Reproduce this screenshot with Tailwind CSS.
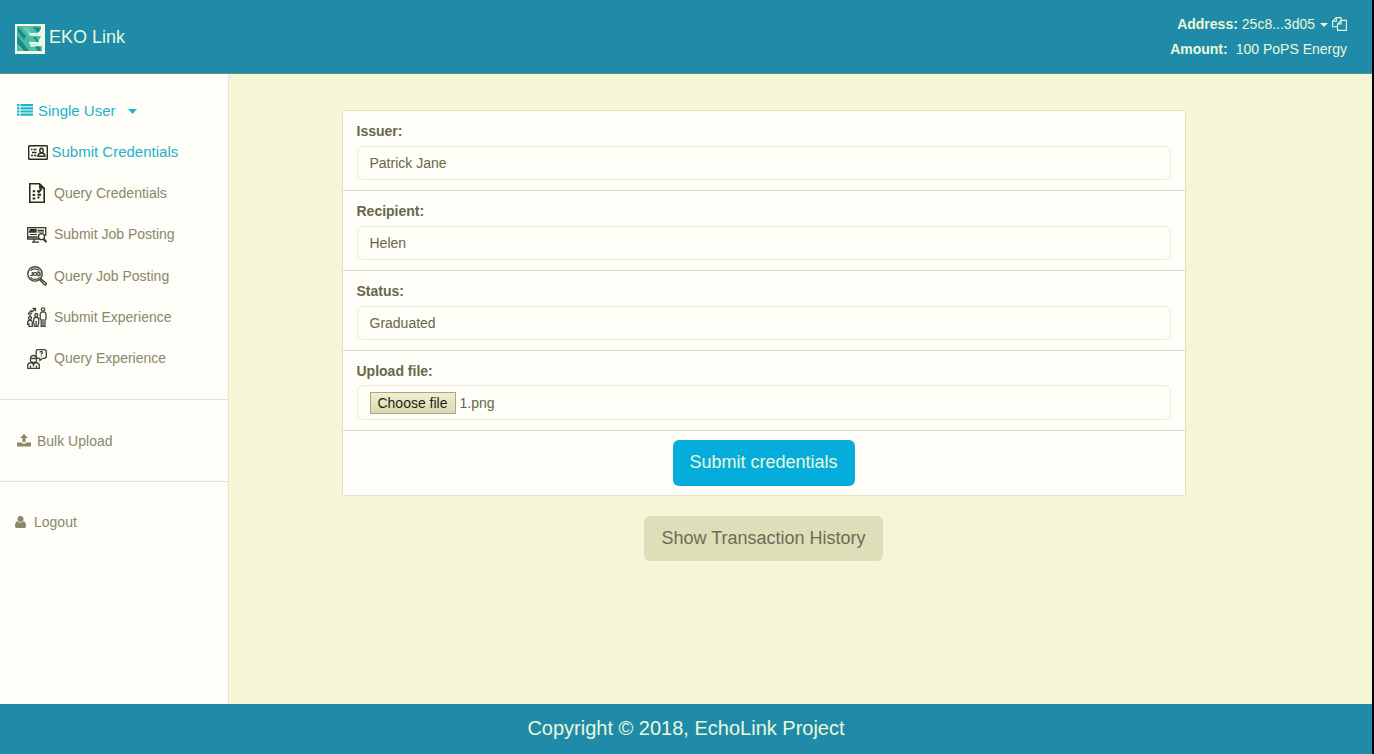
<!DOCTYPE html>
<html lang="en">
<head>
<meta charset="utf-8">
<title>EKO Link</title>
<script src="https://cdn.jsdelivr.net/npm/@tailwindcss/browser@4"></script>
</head>
<body class="flex h-[754px] w-[1374px] flex-col overflow-hidden border-r-2 border-black bg-[#f5f5d8] font-['Liberation_Sans',Arial,sans-serif] text-sm leading-5 text-[#66684a]">

<header class="flex h-[74px] shrink-0 justify-between border-b border-[#4e9a8c] bg-[#208ba9] pt-3 pr-[25px] pl-[15px] text-[#e8f9da]">
  <a class="flex h-[50px] items-center gap-1 text-lg text-[#e8f9da]">
    <svg class="mt-[4px] size-[30px]" viewBox="0 0 30 30">
      <rect width="30" height="30" fill="#eefbe2"/>
      <path d="M2 2h10l3 9v6l-1 1 4 9H2z" fill="#45bba5"/>
      <path d="M12 2h14v2l-3 5h-8zM15 12h11l-3 6h-8zM15 27l1-4 8-1h3v5z" fill="#4fc0a4"/>
      <path d="M2 11l12 16H8L2 19zM3 3l8 9-2 4-6-8zM18 3l4 5h2l2-4zM18 13l4 5h2l-3-5zM20 23l3 4h3l-2-5z" fill="#168b94"/>
      <path d="M9 3l6 9M4 22l4 5M24 10l-9 1.500M24 20l-10 1" stroke="#a9e3cb" stroke-width=".9" fill="none"/>
    </svg>
    <span>EKO Link</span>
  </a>
  <div class="flex flex-col items-end gap-[5px] pt-[2px]">
    <div class="flex h-5 items-center"><b class="mr-1">Address:</b>25c8...3d05
      <svg class="mt-0.5 ml-[5px] h-1 w-2" viewBox="0 0 8 4"><path d="M0 0h8L4 4z" fill="currentColor"/></svg>
      <svg class="ml-1 h-[14px] w-[15px]" viewBox="0 0 15 14" fill="none" stroke="currentColor" stroke-width="1.100"><path d="M5.500 9.800H.6V4.200L4.200.6H9v2.700M4.300.6v3.700H.6M5.500 6.900L9.100 3.400h5.300v10H5.500zM9.100 3.400v3.500H5.500"/></svg>
    </div>
    <div class="h-5"><b class="mr-2">Amount:</b>100 PoPS Energy</div>
  </div>
</header>

<div class="flex min-h-0 flex-1">
  <aside class="w-[229px] shrink-0 border-r border-[#e6e6d0] bg-[#fefdf7] text-[#87896a]">
    <nav class="flex h-[326px] flex-col border-b border-[#e2e2c8] pt-[27px]">
      <a class="flex h-5 items-center pl-[17px] text-[15px] text-[#1fb2cc]">
        <svg class="mr-[5px] mb-[2px] h-3 w-4" viewBox="0 0 16 12" fill="currentColor"><path d="M0 0h2.500v2.200H0zM3.500 0H16v2.200H3.500zM0 3.200h2.500v2.200H0zM3.500 3.200H16v2.200H3.500zM0 6.400h2.500v2.200H0zM3.500 6.400H16v2.200H3.500zM0 9.600h2.500v2.200H0zM3.500 9.600H16v2.200H3.500z"/></svg>
        Single User
        <svg class="ml-3 h-[5px] w-[9px]" viewBox="0 0 9 5"><path d="M0 0h9L4.500 5z" fill="currentColor"/></svg>
      </a>
      <a class="mt-[21px] flex h-5 items-center pl-[28px] text-[15px] text-[#1fb2cc]">
        <svg class="mr-[3.500px] h-[15px] w-5" viewBox="0 0 20 15" fill="none" stroke="#2c2c1e" stroke-width="1.400"><rect x=".7" y=".7" width="18.600" height="13.600" rx=".6"/><path d="M3 4.500h1.500M5.500 4.500h3M4 7.500h4.500M3 10.500h2M6 10.500h2.500M10 11.300c0-2.800 1.500-3.300 3.500-3.300s3.500.5 3.500 3.300z"/><ellipse cx="13.500" cy="5.500" rx="1.700" ry="2.300"/></svg>
        Submit Credentials
      </a>
      <a class="mt-[21px] flex h-5 items-center pl-[27px]">
        <svg class="mr-[7px] size-5" viewBox="0 0 20 20" fill="none" stroke="#2c2c1e" stroke-width="1.600"><path d="M2.800.8h9.700l4.700 4.500v14H2.800z"/><path d="M12 .8l5.200 5H12z" fill="#2c2c1e" stroke="none"/><path d="M5.800 8.200h2.400M5.600 12h2.600M5.600 15.500h2.600M10.500 7.500l1.300 1.500 2.700-3M10.500 11.800h3.500M10.500 14.500h2" stroke-width="2"/></svg>
        Query Credentials
      </a>
      <a class="mt-[21px] flex h-5 items-center pl-[27px]">
        <svg class="mt-[1px] mr-[7px] h-4 w-5" viewBox="0 0 20 16" fill="none" stroke="#35352a" stroke-width="1.300"><path d="M12 12H.7V.7h18v8M.7 10h10M7 12v2.500M5 15.200h7"/><path d="M2.500 5l1-2.500h5.500V5z" fill="#35352a"/><path d="M10.500 3.400h6.500M10.500 5h6.500M3 7.500h7" stroke-width="1.200"/><circle cx="14.500" cy="9.700" r="3" fill="#fefdf7"/><path d="M16.700 12l2.600 3.200" stroke-width="2.100"/></svg>
        Submit Job Posting
      </a>
      <a class="mt-[22px] flex h-5 items-center pl-[27px]">
        <svg class="mr-[7px] size-5" viewBox="0 0 20 20" fill="none" stroke="#45453a"><circle cx="8" cy="7.900" r="7.200" stroke-width="1.400"/><path d="M3.500 4.700C5.500 2.300 10.500 2.300 12.500 4.700M3.500 11.300c2 2.800 7 2.800 9 0M5.300 6v3.500H3.200M10.800 6v3.600h1.400c1.700 0 1.500-1.800 0-1.800 1.200-.2 1-1.700-.2-1.700z" stroke-width="1.200"/><circle cx="8" cy="7.900" r="1.500" stroke-width="1.200"/><path d="M12.800 13.800l1-1 5.300 4.500c.8 1-.7 2.300-1.700 1.500z" stroke-width="1.400"/></svg>
        Query Job Posting
      </a>
      <a class="mt-[21px] flex h-5 items-center pl-[27px]">
        <svg class="mr-[7px] size-5" viewBox="0 0 20 20" fill="none" stroke="#45453a" stroke-width="1.300"><circle cx="3" cy="11" r="1.500"/><circle cx="9.300" cy="8" r="1.500"/><circle cx="16" cy="2.500" r="1.700"/><path d="M.7 18v-2.500c0-3 4.600-3 4.600 0V19.300H2v-3M6.700 16v-3.500c0-3 5-3 5 0V16l-.8 3.300H7.500L6.700 16M9.200 14v5M13.200 12V7.500c0-3.500 5.800-3.500 5.800 0V12l-1 1v6.300h-3.800V13zM16 12v7M1 7.500l3-4 1 1.500L8 1.800M5.500 1.300h3v3M2.500 8.500l2-2.500"/></svg>
        Submit Experience
      </a>
      <a class="mt-[21px] flex h-5 items-center pl-[27px]">
        <svg class="mt-[2px] mr-[7px] size-5" viewBox="0 0 20 20" fill="none" stroke="#45453a" stroke-width="1.300"><path d="M10 .7h8l1.300 1.300v6L18 9.300h-2.500L13 11.500l-.3-2.200H11L9.200 8V2z"/><path d="M13 3.500c0-1.500 2.500-1.500 2.500 0 0 1-1.200.8-1.200 2M14.300 6.500v1"/><path d="M3.500 12V9.500c0-4 6-4 6 0V12c-1 2-5 2-6 0M3.700 9.500h5.600M.7 19.300v-3c0-2 2-2.500 3.500-2.800l2.300 2 2.300-2c1.500.3 3.500.8 3.500 2.800v3zM3.500 16.500v2.500M9.500 16.500v2.500M6.500 15.500v2"/></svg>
        Query Experience
      </a>
    </nav>
    <div class="flex h-[82px] items-center border-b border-[#e2e2c8] pl-[17px]">
      <svg class="mr-[6px] h-[13px] w-[14px]" viewBox="0 0 14 13" fill="currentColor"><path d="M7 0l4 4H8.500v4h-3V4H3zM0 8.500h4.500C5 10 9 10 9.500 8.500H14v4H0z"/></svg>
      Bulk Upload
    </div>
    <div class="flex h-[79px] items-center pl-[15px]">
      <svg class="mr-2 h-3 w-[11px]" viewBox="0 0 11 12" fill="currentColor"><circle cx="5.500" cy="3" r="3"/><path d="M2.500 5c1.500 2 4.500 2 6 0C10.500 5.500 11 8 11 10c0 1.500-.8 2-2 2H2c-1.200 0-2-.5-2-2C0 8 .5 5.500 2.500 5z"/></svg>
      Logout
    </div>
  </aside>

  <main class="flex flex-1 flex-col items-center pt-9 pr-[74px]">
    <form class="w-[844px] divide-y divide-[#dcdcc6] rounded-[3px] border border-[#e2e2c6] bg-[#fefdf7]">
      <label class="block h-20 px-[14px] pt-[10px]"><b class="block">Issuer:</b>
        <span class="mt-[5px] flex h-[34px] items-center rounded-md border border-[#ececcf] px-3">Patrick Jane</span></label>
      <label class="block h-20 px-[14px] pt-[10px]"><b class="block">Recipient:</b>
        <span class="mt-[5px] flex h-[34px] items-center rounded-md border border-[#ececcf] px-3">Helen</span></label>
      <label class="block h-20 px-[14px] pt-[10px]"><b class="block">Status:</b>
        <span class="mt-[5px] flex h-[34px] items-center rounded-md border border-[#ececcf] px-3">Graduated</span></label>
      <label class="block h-20 px-[14px] pt-[10px]"><b class="block">Upload file:</b>
        <span class="mt-[4px] flex h-[35px] items-center rounded-md border border-[#ececcf] px-3"><span class="mr-1 flex h-[22px] w-[86px] items-center justify-center border border-[#a8a986] bg-linear-to-b from-[#f1f0cf] to-[#dad9b2] text-[#1d1d18]">Choose file</span>1.png</span></label>
      <div class="flex h-[64px] justify-center pt-[9px]">
        <button class="h-[46px] w-[182px] rounded-md bg-[#06acdc] pb-0.5 text-lg leading-6 text-[#e6fada]" type="button">Submit credentials</button>
      </div>
    </form>
    <button class="mt-5 h-[45px] w-[239px] rounded-md bg-[#dedeb8] pb-0.5 text-lg leading-6 text-[#6b6d56]" type="button">Show Transaction History</button>
  </main>
</div>

<footer class="flex h-[50px] shrink-0 items-center justify-center bg-[#208ba9] pb-0.5 text-xl text-[#e8f9da]">Copyright © 2018, EchoLink Project</footer>
</body>
</html>
